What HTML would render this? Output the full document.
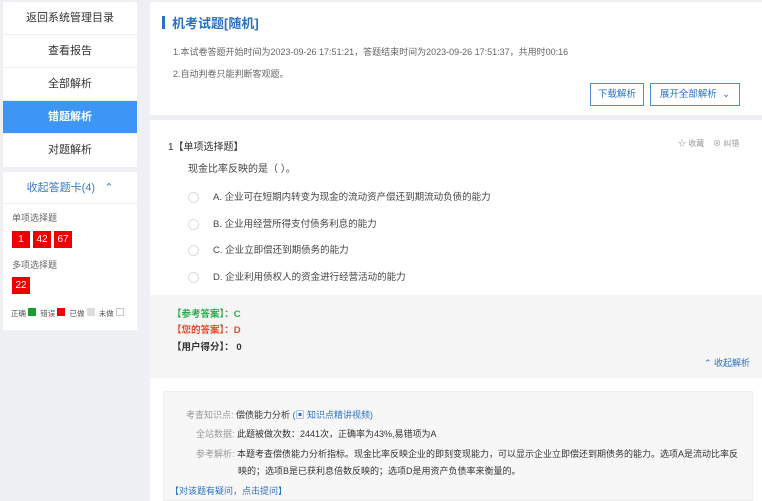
<!DOCTYPE html><html><head><meta charset="utf-8"><style>
*{margin:0;padding:0;box-sizing:border-box}
body{width:762px;height:501px;overflow:hidden;background:#eef0f3;font-family:"Liberation Sans","Noto Sans CJK SC",sans-serif;font-size:9px;color:#333;position:relative}
.a{position:absolute}
.menu{left:3px;top:2px;width:134px;background:#fff}
.menu div{height:33px;line-height:33px;text-align:center;font-size:11px;border-bottom:1px solid #eee;color:#333}
.menu .on{background:#3d96f5;color:#fff;font-weight:bold}
.card{left:3px;top:172px;width:134px;height:158px;background:#fff}
.sq{display:inline-block;width:18px;height:17px;background:#e00;color:#fff;font-size:10px;line-height:17px;text-align:center;margin-right:3px}
.t{font-size:9px;color:#666}
.btn{border:1px solid #4a8fd6;color:#2a72c0;font-size:9.5px;height:23px;line-height:21px;text-align:center;background:#fff}
.opt{left:188px;font-size:9.5px;color:#444}
.opt i{display:inline-block;width:11px;height:11px;border:1px solid #ddd;border-radius:50%;vertical-align:middle;margin-right:14px}
</style></head><body>
<div class="a menu">
<div>返回系统管理目录</div><div>查看报告</div><div>全部解析</div><div class="on">错题解析</div><div style="border:none">对题解析</div>
</div>
<div class="a card">
<div style="height:32px;line-height:32px;text-align:center;color:#3a7ac2;font-size:11px;border-bottom:1px solid #eee">收起答题卡(4) &nbsp; &#8963;</div>
<div class="a t" style="left:9px;top:39px">单项选择题</div>
<div class="a" style="left:9px;top:59px"><span class="sq">1</span><span class="sq">42</span><span class="sq">67</span></div>
<div class="a t" style="left:9px;top:86px">多项选择题</div>
<div class="a" style="left:9px;top:105px"><span class="sq">22</span></div>
<div class="a" style="left:8px;top:136px;font-size:7.5px;color:#555">正确 <span style="display:inline-block;width:8px;height:8px;background:#1a9a2a"></span> &nbsp;错误 <span style="display:inline-block;width:8px;height:8px;background:#e00"></span> &nbsp;已做 <span style="display:inline-block;width:8px;height:8px;background:#ddd"></span> &nbsp;未做 <span style="display:inline-block;width:8px;height:8px;border:1px solid #ccc"></span></div>
</div>
<div class="a" style="left:150px;top:2px;width:612px;height:113px;background:#fff">
<div class="a" style="left:12px;top:14px;width:3px;height:13px;background:#2a72c0"></div>
<div class="a" style="left:22px;top:11px;font-size:13px;font-weight:bold;color:#2a72c0">机考试题[随机]</div>
<div class="a t" style="left:23px;top:43px">1.本试卷答题开始时间为2023-09-26 17:51:21，答题结束时间为2023-09-26 17:51:37，共用时00:16</div>
<div class="a t" style="left:23px;top:65px">2.自动判卷只能判断客观题。</div>
<div class="a btn" style="left:440px;top:81px;width:54px">下载解析</div>
<div class="a btn" style="left:500px;top:81px;width:90px">展开全部解析 &nbsp;&#8964;</div>
</div>
<div class="a" style="left:150px;top:120px;width:612px;height:381px;background:#fff"></div>
<div class="a" style="left:168px;top:138px;font-size:10px">1【单项选择题】</div>
<div class="a" style="left:678px;top:138px;font-size:8px;color:#999">☆ 收藏 &nbsp;&nbsp; ⊗ 纠错</div>
<div class="a" style="left:188px;top:160px;font-size:10px;color:#444">现金比率反映的是（ ）。</div>
<div class="a opt" style="top:189px"><i></i>A. 企业可在短期内转变为现金的流动资产偿还到期流动负债的能力</div>
<div class="a opt" style="top:216px"><i></i>B. 企业用经营所得支付债务利息的能力</div>
<div class="a opt" style="top:242px"><i></i>C. 企业立即偿还到期债务的能力</div>
<div class="a opt" style="top:269px"><i></i>D. 企业利用债权人的资金进行经营活动的能力</div>
<div class="a" style="left:150px;top:295px;width:612px;height:83px;background:#f5f5f6"></div>
<div class="a" style="left:172px;top:306px;font-size:9.5px;color:#2aa94a;font-weight:bold">【参考答案】：C</div>
<div class="a" style="left:172px;top:322px;font-size:9.5px;color:#e04a2a;font-weight:bold">【您的答案】：D</div>
<div class="a" style="left:172px;top:339px;font-size:9.5px;color:#333;font-weight:bold">【用户得分】： 0</div>
<div class="a" style="left:704px;top:356px;font-size:9px;color:#2a72c0">&#8963; 收起解析</div>
<div class="a" style="left:163px;top:391px;width:590px;height:110px;background:#f7f7f7;border:1px solid #eee"></div>
<div class="a" style="left:186px;top:408px;font-size:9px;color:#999">考查知识点: <span style="color:#333">偿债能力分析</span> <span style="color:#2a72c0">(▣ 知识点精讲视频)</span></div>
<div class="a" style="left:196px;top:427px;font-size:9px;color:#999">全站数据: <span style="color:#333">此题被做次数：2441次，正确率为43%,易错项为A</span></div>
<div class="a" style="left:196px;top:446px;width:555px;font-size:9px;line-height:17px;color:#999">参考解析: <span style="color:#333">本题考查偿债能力分析指标。现金比率反映企业的即刻变现能力，可以显示企业立即偿还到期债务的能力。选项A是流动比率反</span><br><span style="color:#333;padding-left:42px">映的；选项B是已获利息倍数反映的；选项D是用资产负债率来衡量的。</span></div>
<div class="a" style="left:170px;top:484px;font-size:9px;color:#2a72c0">【对该题有疑问，点击提问】</div>
</body></html>
